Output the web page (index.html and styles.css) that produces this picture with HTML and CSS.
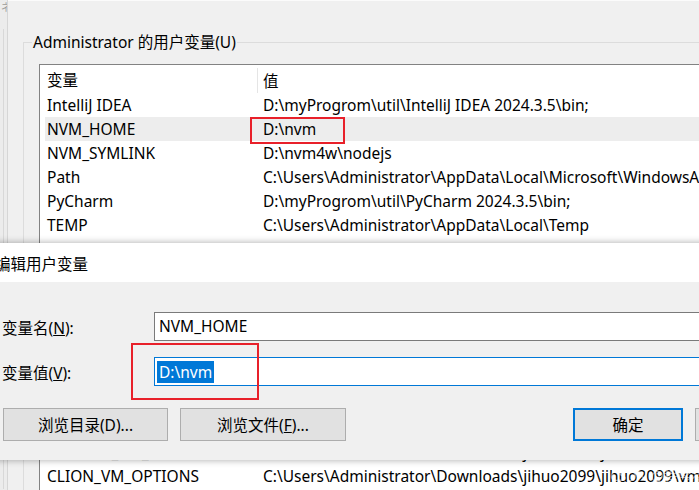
FILE: index.html
```html
<!DOCTYPE html>
<html lang="zh-CN">
<head>
<meta charset="utf-8">
<title>编辑用户变量</title>
<link rel="stylesheet" href="styles.css">
</head>
<body>
<div class="screen">
  <div class="bg">
    <div class="strip"><span class="strip-glyph">ネ</span><div class="strip-line"></div></div>
    <div class="win">
      <div class="group">
        <div class="legend">Administrator 的用户变量(U)</div>
        <div class="list">
          <div class="row head"><div class="c1">变量</div><div class="c2">值</div></div>
          <div class="row"><div class="c1">IntelliJ IDEA</div><div class="c2">D:\myProgrom\util\IntelliJ IDEA 2024.3.5\bin;</div></div>
          <div class="row sel"><div class="c1">NVM_HOME</div><div class="c2">D:\nvm</div></div>
          <div class="row"><div class="c1">NVM_SYMLINK</div><div class="c2">D:\nvm4w\nodejs</div></div>
          <div class="row"><div class="c1">Path</div><div class="c2">C:\Users\Administrator\AppData\Local\Microsoft\WindowsApps;</div></div>
          <div class="row"><div class="c1">PyCharm</div><div class="c2">D:\myProgrom\util\PyCharm 2024.3.5\bin;</div></div>
          <div class="row"><div class="c1">TEMP</div><div class="c2">C:\Users\Administrator\AppData\Local\Temp</div></div>
          <div class="row"><div class="c1">TMP</div><div class="c2">C:\Users\Administrator\AppData\Local\Temp</div></div>
          <div class="filler"></div>
          <div class="row"><div class="c1">GOLAND_VM_OPTIONS</div><div class="c2">C:\Users\Administrator\Downloads\jihuo2099\jihuo2099\vmoptions\goland.vmoptions</div></div>
          <div class="row"><div class="c1">CLION_VM_OPTIONS</div><div class="c2">C:\Users\Administrator\Downloads\jihuo2099\jihuo2099\vmoptions\clion.vmoptions</div></div>
        </div>
      </div>
    </div>
  </div>

  <div class="dialog">
    <div class="titlebar">编辑用户变量</div>
    <div class="body">
      <div class="fields">
        <label class="lbl">变量名(<u>N</u>):</label>
        <div class="input">NVM_HOME</div>
        <label class="lbl">变量值(<u>V</u>):</label>
        <div class="input focus"><span class="selected">D:\nvm</span></div>
      </div>
      <div class="buttons">
        <button class="btn">浏览目录(D)...</button>
        <button class="btn">浏览文件(<u>F</u>)...</button>
        <button class="btn primary">确定</button>
        <button class="btn">取消</button>
      </div>
    </div>
  </div>

  <div class="mark mark-list"></div>
  <div class="mark mark-input"></div>
  <div class="watermark">CSDN @程序猿</div>
</div>
</body>
</html>
```

FILE: styles.css
```css
* { box-sizing: border-box; }
html, body { margin: 0; padding: 0; }
body {
  font-family: "Noto Sans", "Noto Sans CJK SC", sans-serif;
  font-size: 15.5px;
  color: #000;
  background: #f0f0f0;
}
.screen {
  position: relative;
  width: 699px;
  height: 490px;
  overflow: hidden;
}
.bg {
  display: flex;
  height: 490px;
  background: #f0f0f0;
}
.strip {
  width: 8px;
  flex: none;
  background: #ececec;
  border-right: 1px solid #d6d6d6;
  overflow: hidden;
}
.strip-glyph {
  display: block;
  font-size: 10px;
  line-height: 12px;
  color: #9a9a9a;
  margin: 1px 0 0 1px;
}
.strip-line {
  margin: 16px 0 0 3px;
  width: 1px;
  height: 460px;
  background: #d8d8d8;
}
.win {
  flex: 1;
  min-width: 0;
  border-top: 1px solid #fbfbfb;
  padding-top: 41px;
}
.group {
  margin-left: 15px;
  border-top: 1px solid #dcdcdc;
  border-left: 1px solid #dcdcdc;
  height: 460px;
}
.legend {
  width: fit-content;
  margin: -11px 0 0 8px;
  padding: 0 1px;
  line-height: 20px;
  background: #f0f0f0;
  white-space: nowrap;
}
.list {
  margin: 12px 0 0 15px;
  border-top: 1px solid #828282;
  border-left: 1px solid #828282;
  background: #fff;
  padding-left: 5px;
  height: 440px;
}
.row {
  display: flex;
  height: 24px;
  line-height: 24px;
  white-space: nowrap;
}
.row.sel { background: #ededed; }
.row.head { height: 28px; line-height: 28px; padding-top: 1px; }
.c1 { width: 212px; flex: none; padding-left: 2px; overflow: hidden; }
.c2 { flex: 1; padding-left: 6px; overflow: hidden; }
.head .c2 { border-left: 1px solid #e5e5e5; padding-left: 5px; margin: 2px 0 0; line-height: 26px; }
.filler { height: 179px; }

.dialog {
  position: absolute;
  top: 243px;
  left: -13px;
  width: 760px;
  height: 217px;
  background: #f0f0f0;
  box-shadow: 0 0 7px rgba(0, 0, 0, 0.35);
  display: flex;
  flex-direction: column;
}
.titlebar {
  height: 39px;
  background: #fff;
  line-height: 42px;
  padding-left: 8px;
  white-space: nowrap;
}
.body {
  padding: 30px 0 0 15px;
}
.fields {
  display: grid;
  grid-template-columns: 152px 1fr;
  row-gap: 16px;
  align-items: center;
}
.lbl { white-space: nowrap; padding-top: 1px; }
.input {
  height: 29px;
  background: #fff;
  border: 1px solid #7a7a7a;
  line-height: 27px;
  padding-left: 4px;
  white-space: nowrap;
}
.input.focus {
  border-color: #0078d7;
  padding-left: 2px;
  display: flex;
  align-items: center;
}
.selected {
  background: #0078d7;
  color: #fff;
  line-height: 22px;
  padding: 0 2px;
}
.buttons {
  display: flex;
  gap: 12px;
  margin-top: 22px;
  margin-left: 1px;
}
.btn {
  flex: none;
  width: 165px;
  height: 33px;
  background: #e1e1e1;
  border: 1px solid #adadad;
  font: inherit;
  color: #000;
  padding: 0;
}
.btn + .btn { width: 166px; }
.btn.primary {
  width: 110px;
  border: 2px solid #0078d7;
  margin-left: 215px;
}
.btn.primary + .btn { width: 110px; }

.mark {
  position: absolute;
  border: 2px solid #e8202a;
}
.mark-list { left: 250px; top: 117px; width: 95px; height: 27px; }
.mark-input { left: 131px; top: 343px; width: 128px; height: 57px; }
.watermark {
  position: absolute;
  left: 610px;
  top: 466px;
  line-height: 20px;
  font-size: 14px;
  color: rgba(255, 255, 255, 0.55);
  white-space: nowrap;
}
```
